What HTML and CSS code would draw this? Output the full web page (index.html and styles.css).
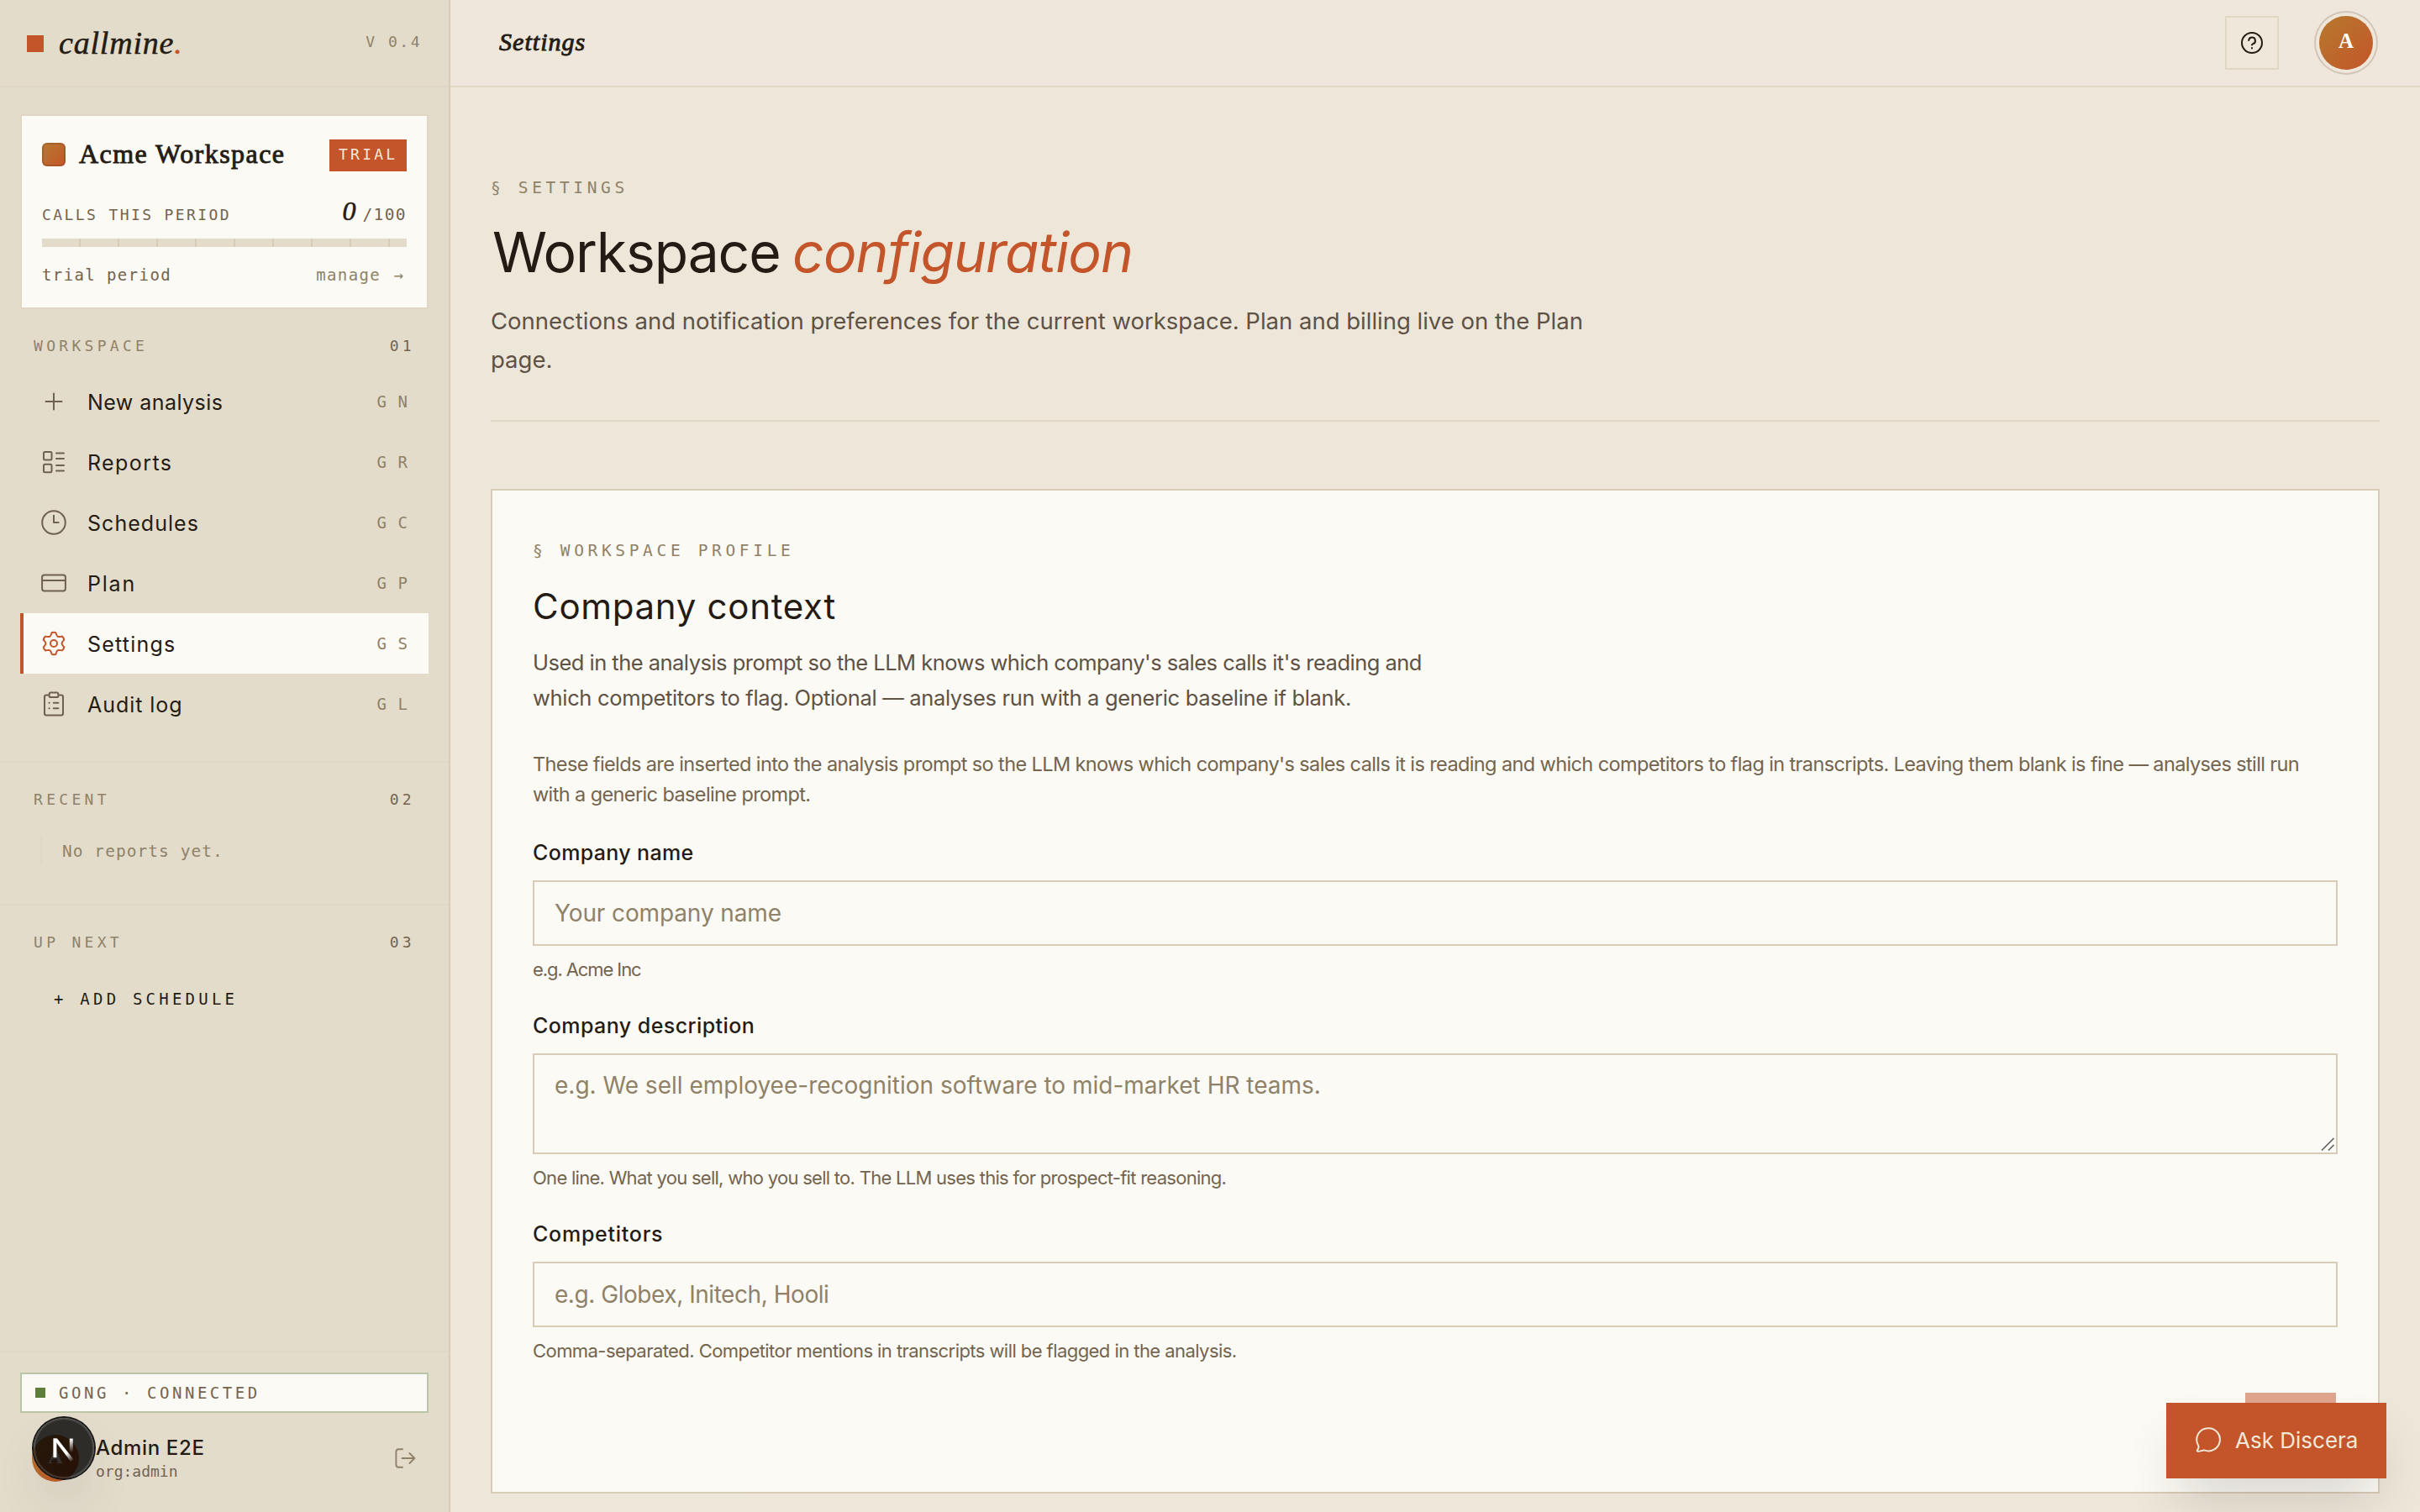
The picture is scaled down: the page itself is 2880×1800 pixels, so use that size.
FILE: index.html
```html
<!DOCTYPE html>
<html lang="en">
<head>
<meta charset="utf-8">
<title>Settings · callmine</title>
<link rel="stylesheet" href="styles.css">
</head>
<body>
<div class="app">
  <aside class="sidebar">
    <div class="brand">
      <span class="brand-mark"></span>
      <span class="brand-name">callmine<span class="brand-dot">.</span></span>
      <span class="brand-version">V 0.4</span>
    </div>

    <section class="plan-card">
      <div class="plan-head">
        <span class="plan-swatch"></span>
        <span class="plan-name">Acme Workspace</span>
        <span class="plan-badge">TRIAL</span>
      </div>
      <div class="plan-usage">
        <span class="plan-usage-label">CALLS THIS PERIOD</span>
        <span class="plan-usage-value"><em>0</em><span class="plan-usage-max">/100</span></span>
      </div>
      <div class="plan-bar"></div>
      <div class="plan-foot">
        <span>trial period</span>
        <a class="plan-manage">manage <span class="arrow">→</span></a>
      </div>
    </section>

    <div class="section-label section-label-first"><span>WORKSPACE</span><span class="section-no">01</span></div>
    <nav class="nav">
      <a class="nav-item">
        <svg class="nav-icon" viewBox="-16 -16 32 32"><path d="M-9.5 0H9.5M0-9.5V9.5"/></svg>
        <span class="nav-text ls-new">New analysis</span><span class="kbd">G N</span>
      </a>
      <a class="nav-item">
        <svg class="nav-icon" viewBox="-16 -16 32 32"><rect x="-12" y="-12" width="9.5" height="9.5" rx="1.5"/><rect x="-12" y="2.8" width="9.5" height="9.5" rx="1.5"/><path d="M3-10.5H12M3-4H12M3 3.9H12M3 10.6H12"/></svg>
        <span class="nav-text ls-reports">Reports</span><span class="kbd">G R</span>
      </a>
      <a class="nav-item">
        <svg class="nav-icon" viewBox="-16 -16 32 32"><circle r="13.8"/><path d="M0-8.3V0H5.6"/></svg>
        <span class="nav-text ls-schedules">Schedules</span><span class="kbd">G C</span>
      </a>
      <a class="nav-item">
        <svg class="nav-icon" viewBox="-16 -16 32 32"><rect x="-13.9" y="-9.4" width="27.8" height="18.8" rx="2.6"/><path d="M-13.9-3H13.9"/></svg>
        <span class="nav-text ls-plan">Plan</span><span class="kbd">G P</span>
      </a>
      <a class="nav-item is-active">
        <svg class="nav-icon" viewBox="-16 -16 32 32">
          <defs><path id="cog-lobe" d="M-2.26-12.8Q0-13.8 2.26-12.8C3-11.6 3.19-9.13 4.75-8.23C6.31-7.33 8.55-8.4 9.96-8.36"/></defs>
          <use href="#cog-lobe"/><use href="#cog-lobe" transform="rotate(60)"/><use href="#cog-lobe" transform="rotate(120)"/><use href="#cog-lobe" transform="rotate(180)"/><use href="#cog-lobe" transform="rotate(240)"/><use href="#cog-lobe" transform="rotate(300)"/>
          <circle r="4"/>
        </svg>
        <span class="nav-text ls-settings">Settings</span><span class="kbd">G S</span>
      </a>
      <a class="nav-item">
        <svg class="nav-icon" viewBox="-16 -16 32 32"><path d="M-6-10.6H-9Q-11-10.6-11-8.6V11.4Q-11 13.4-9 13.4H9Q11 13.4 11 11.4V-8.6Q11-10.6 9-10.6H6"/><rect x="-5.3" y="-13.4" width="10.6" height="5.4" rx="1.6"/><path d="M-.2-1.3H5.4M-.2 5.3H5.4M-5.6-1.3H-5.3M-5.6 5.3H-5.3"/></svg>
        <span class="nav-text ls-audit">Audit log</span><span class="kbd">G L</span>
      </a>
    </nav>

    <section class="side-section">
      <div class="section-label"><span>RECENT</span><span class="section-no">02</span></div>
      <div class="recent-empty">No reports yet.</div>
    </section>

    <section class="side-section">
      <div class="section-label"><span>UP NEXT</span><span class="section-no">03</span></div>
      <a class="add-schedule">+ ADD SCHEDULE</a>
    </section>

    <footer class="side-foot">
      <div class="conn"><span class="conn-dot"></span><span>GONG · CONNECTED</span></div>
      <div class="user">
        <span class="user-avatar">A</span>
        <span class="user-meta"><span class="user-name">Admin E2E</span><span class="user-role">org:admin</span></span>
        <svg class="user-logout" viewBox="0 0 28 28"><path d="M11 3.2H6.4Q3.4 3.2 3.4 6.2V21.8Q3.4 24.8 6.4 24.8H11M10.5 14H25.4M19.4 8L25.4 14L19.4 20"/></svg>
      </div>
    </footer>
  </aside>

  <div class="main">
    <header class="topbar">
      <span class="topbar-title">Settings</span>
      <span class="topbar-help">
        <svg viewBox="-16 -16 32 32"><circle r="12"/><path d="M-3.8-3A3.9 3.9 0 1 1 1.2 1.2Q0 1.7 0 2.6"/><path class="dot" d="M0 6V6.4"/></svg>
      </span>
      <span class="topbar-avatar">A</span>
    </header>

    <main class="content">
      <div class="page-head">
        <div class="eyebrow">§ SETTINGS</div>
        <h1><span class="h1-a">Workspace</span> <em>configuration</em></h1>
        <p class="lede">Connections and notification preferences for the current workspace. Plan and billing live on the Plan<br>page.</p>
      </div>

      <section class="card">
        <div class="eyebrow">§ WORKSPACE PROFILE</div>
        <h2>Company context</h2>
        <p class="card-intro"><span>Used in the analysis prompt so the LLM knows which company's sales calls it's reading and</span><br><span class="card-intro-end">which competitors to flag. Optional — analyses run with a generic baseline if blank.</span></p>
        <p class="card-note">These fields are inserted into the analysis prompt so the LLM knows which company's sales calls it is reading and which competitors to flag in transcripts. Leaving them blank is fine — analyses still run<br>with a generic baseline prompt.</p>

        <label class="field-label" for="f-name">Company name</label>
        <input class="field-input ls-ph-name" id="f-name" type="text" placeholder="Your company name">
        <div class="hint hint-name">e.g. Acme Inc</div>

        <label class="field-label ls-desc" for="f-desc">Company description</label>
        <div class="area">
          <textarea class="field-input field-area" id="f-desc" placeholder="e.g. We sell employee-recognition software to mid-market HR teams."></textarea>
          <svg class="grip" viewBox="0 0 18 18"><path d="M2 16.5L16.5 2M10 16.5L16.5 10"/></svg>
        </div>
        <div class="hint hint-desc">One line. What you sell, who you sell to. The LLM uses this for prospect-fit reasoning.</div>

        <label class="field-label ls-comp" for="f-comp">Competitors</label>
        <input class="field-input ls-ph-comp" id="f-comp" type="text" placeholder="e.g. Globex, Initech, Hooli">
        <div class="hint hint-comp">Comma-separated. Competitor mentions in transcripts will be flagged in the analysis.</div>

        <div class="actions"><span class="save"></span></div>
      </section>
    </main>
  </div>
</div>

<div class="dev-badge">
  <svg viewBox="-38 -38 76 76">
    <defs>
      <linearGradient id="n-diag" gradientUnits="userSpaceOnUse" x1="0" y1="2" x2="10" y2="16"><stop offset=".3" stop-color="#fff"/><stop offset="1" stop-color="#fff" stop-opacity="0"/></linearGradient>
      <linearGradient id="n-stem" gradientUnits="userSpaceOnUse" x1="0" y1="-11" x2="0" y2="5"><stop offset="0" stop-color="#fff"/><stop offset="1" stop-color="#fff" stop-opacity="0"/></linearGradient>
    </defs>
    <rect x="-12.6" y="-11.4" width="4" height="22.6" fill="#fff"/>
    <path d="M-12.6-11.4H-8L11.6 13.4L8.2 16Z" fill="url(#n-diag)"/>
    <rect x="6.8" y="-11.4" width="4" height="16.5" fill="url(#n-stem)"/>
  </svg>
</div>

<button class="ask">
  <svg viewBox="0 0 32 32"><path d="M16 2.2A13.6 13.6 0 1 1 11.2 28.4C8.6 28.2 6.4 30.3 3.4 29.8C2.4 29.6 2.6 28.6 3.4 27.6C4.8 25.8 4.6 23.6 4 22.4A13.6 13.6 0 0 1 16 2.2Z"/></svg>
  <span>Ask Discera</span>
</button>
</body>
</html>
```
FILE: styles.css
```css
:root {
  --ink: #241c14;
  --ink-2: #5e5246;
  --ink-3: #73644f;
  --ink-4: #8f8268;
  --accent: #c4552a;
  --paper: #fcfaf4;
  --side: #e4dccb;
  --bg: #eee6d9;
  --rule: #e0d8c5;
  --rule-strong: #d7ccb8;
  --sans: Inter, "Liberation Sans", sans-serif;
  --serif: "Liberation Serif", serif;
  --mono: "DejaVu Sans Mono", "Liberation Mono", monospace;
}

* { box-sizing: border-box; }

body {
  margin: 0;
  background: linear-gradient(90deg, #ede7d9 20%, #eee6d9 80%);
  color: var(--ink);
  font-family: var(--sans);
}

.app {
  display: grid;
  grid-template-columns: 536px 1fr;
  height: 1800px;
  overflow: hidden;
}

/* Sidebar */
.sidebar {
  display: flex;
  flex-direction: column;
  background: var(--side);
  border-right: 2px solid var(--rule-strong);
  font-family: var(--mono);
}

.brand {
  display: flex;
  align-items: center;
  height: 104px;
  padding: 0 32px;
  border-bottom: 2px solid #dfd6c5;
}
.brand-mark { width: 20px; height: 20px; background: var(--accent); margin-top: 2px; }
.brand-name {
  margin-left: 18px;
  font: italic 38px/44px var(--serif);
  letter-spacing: .8px;
  -webkit-text-stroke: .5px;
}
.brand-dot { color: var(--accent); }
.brand-version {
  margin-left: auto;
  padding-bottom: 3px;
  font-size: 18px;
  letter-spacing: 2.52px;
  color: var(--ink-4);
}

.plan-card {
  height: 232px;
  margin: 32px 24px 0;
  padding: 24px;
  background: var(--paper);
  border: 2px solid var(--rule);
}
.plan-head { display: flex; align-items: center; height: 46px; }
.plan-swatch {
  width: 28px;
  height: 28px;
  margin-bottom: 2px;
  border-radius: 6px;
  background: linear-gradient(135deg, #b67a2e, #c4552a);
  box-shadow: inset 0 0 0 2px rgba(36, 28, 20, .15);
}
.plan-name {
  margin-left: 16px;
  padding-bottom: 4px;
  font: 32px/40px var(--serif);
  letter-spacing: 1.45px;
  -webkit-text-stroke: .9px;
}
.plan-badge {
  width: 92px;
  height: 38px;
  margin-left: auto;
  padding-left: 11px;
  background: var(--accent);
  color: #f3e8d8;
  font-size: 18px;
  line-height: 36px;
  letter-spacing: 3.24px;
}
.plan-usage {
  display: flex;
  justify-content: space-between;
  align-items: baseline;
  height: 36px;
  margin-top: 25px;
  color: var(--ink-3);
}
.plan-usage-label { font-size: 18px; letter-spacing: 2.4px; }
.plan-usage-value em {
  display: inline-block;
  margin-right: 8px;
  font: italic 32px/36px var(--serif);
  color: var(--ink);
  -webkit-text-stroke: .6px;
}
.plan-usage-max { font-size: 19.5px; letter-spacing: 1.4px; }
.plan-bar {
  height: 10px;
  margin-top: 15px;
  background: repeating-linear-gradient(90deg, #e4dccb 0 44px, #d7ccb8 44px 46px);
}
.plan-foot {
  display: flex;
  justify-content: space-between;
  margin-top: 19px;
  color: var(--ink-3);
  font-size: 19px;
  line-height: 28px;
  letter-spacing: 1.4px;
}
.plan-manage { color: var(--ink-4); }
.arrow { display: inline-block; width: 18px; font-size: 19px; line-height: 20px; text-align: center; }

.section-label {
  display: flex;
  justify-content: space-between;
  padding: 0 40px;
  color: var(--ink-4);
  font-size: 18px;
  line-height: 24px;
  letter-spacing: 4.3px;
}
.section-label-first { margin-top: 32px; }
.section-no { color: var(--ink-3); }

.nav { margin: 18px 24px 32px; }
.nav-item {
  display: flex;
  align-items: center;
  height: 72px;
  padding: 0 24px 0 20px;
  border-left: 4px solid transparent;
}
.nav-item.is-active { background: var(--paper); border-left-color: var(--accent); }
.nav-icon {
  width: 32px;
  height: 32px;
  fill: none;
  stroke: #6f6150;
  stroke-width: 2;
  stroke-linecap: round;
  stroke-linejoin: round;
}
.is-active .nav-icon { stroke: var(--accent); }
.nav-text { margin-left: 24px; padding-top: 1px; font: 25px/36px var(--sans); }
.ls-new { letter-spacing: .45px; }
.ls-reports { letter-spacing: 1.4px; }
.ls-schedules { letter-spacing: 1.03px; }
.ls-plan { letter-spacing: 1.8px; }
.ls-settings { letter-spacing: 1.2px; }
.ls-audit { letter-spacing: .95px; }
.kbd {
  margin-left: auto;
  padding-bottom: 1px;
  color: var(--ink-4);
  font-size: 19px;
  letter-spacing: 1.1px;
}

.side-section { border-top: 2px solid #dfd7c7; padding: 32px 0 0; }
.recent-empty {
  height: 31px;
  margin: 33px 24px 48px 48px;
  padding-left: 24px;
  border-left: 2px solid #dfd7c7;
  color: var(--ink-4);
  font-size: 19.5px;
  line-height: 33px;
  letter-spacing: 1.05px;
}
.add-schedule {
  display: block;
  margin: 39px 0 0 64px;
  color: var(--ink);
  font-size: 19px;
  line-height: 32px;
  letter-spacing: 4.22px;
}

.side-foot {
  height: 192px;
  margin-top: auto;
  padding: 24px 24px 0;
  border-top: 2px solid #dfd7c7;
}
.conn {
  display: flex;
  align-items: center;
  height: 48px;
  padding: 0 0 1px 16px;
  background: var(--paper);
  border: 2px solid #bac5a8;
  color: var(--ink-3);
  font-size: 19px;
  letter-spacing: 3.55px;
}
.conn-dot { width: 12px; height: 12px; margin: 1px 16px 0 0; background: #5d7d3b; }
.user {
  display: flex;
  align-items: center;
  height: 56px;
  margin-top: 26px;
  padding: 0 14px;
}
.user-avatar {
  width: 56px;
  height: 56px;
  border-radius: 50%;
  background: linear-gradient(135deg, #b67a2e, #c4552a);
  color: #fff;
  font: bold 24px/52px var(--serif);
  text-align: center;
}
.user-meta { display: flex; flex-direction: column; margin-left: 20px; padding-top: 4px; }
.user-name { font: 500 24px/28px var(--sans); letter-spacing: .66px; }
.user-role { font-size: 18px; line-height: 28px; color: var(--ink-3); }
.user-logout {
  width: 28px;
  height: 28px;
  margin-left: auto;
  fill: none;
  stroke: var(--ink-4);
  stroke-width: 1.9;
  stroke-linecap: round;
  stroke-linejoin: round;
}

/* Main column */
.main { display: flex; flex-direction: column; min-width: 0; }

.topbar {
  display: flex;
  align-items: center;
  height: 104px;
  padding: 0 56px;
  background: #efe7dc;
  border-bottom: 2px solid var(--rule);
}
.topbar-title {
  padding-bottom: 2px;
  margin-left: 2px;
  font: italic 30px/36px var(--serif);
  letter-spacing: 1.04px;
  -webkit-text-stroke: .9px;
}
.topbar-help {
  display: grid;
  place-items: center;
  width: 64px;
  height: 64px;
  margin-left: auto;
  margin-right: 48px;
  border: 2px solid var(--rule);
  background: #efe7d9;
}
.topbar-help svg {
  width: 32px;
  height: 32px;
  fill: none;
  stroke: var(--ink);
  stroke-width: 2;
  stroke-linecap: round;
}
.topbar-avatar {
  width: 64px;
  height: 64px;
  border-radius: 50%;
  background: linear-gradient(135deg, #b67a2e, #c4552a);
  box-shadow: 0 0 0 4px #efe7d9, 0 0 0 6px #cfc6b9;
  color: #fff;
  font: bold 25px/60px var(--serif);
  text-align: center;
}

.content { padding: 106px 48px 0; }
.eyebrow {
  color: var(--ink-4);
  font: 19.5px/28px var(--mono);
  letter-spacing: 4.65px;
}
.page-head { padding-bottom: 49px; border-bottom: 2px solid var(--rule); }
h1 {
  margin: 24px 0 0;
  padding-left: 2px;
  font-size: 66px;
  font-weight: 400;
  line-height: 76px;
  letter-spacing: -1.1px;
}
h1 em { margin-left: -3px; color: var(--accent); letter-spacing: -.93px; }
.lede {
  margin: 21px 0 0;
  color: var(--ink-2);
  font-size: 27.5px;
  line-height: 46px;
}

.card {
  height: 1196px;
  margin-top: 80px;
  padding: 58px 48px 0;
  background: var(--paper);
  border: 2px solid var(--rule-strong);
}
h2 {
  margin: 26px 0 0;
  font-size: 42px;
  font-weight: 400;
  line-height: 52px;
  letter-spacing: .7px;
}
.card-intro {
  margin: 20px 0 0;
  color: var(--ink-2);
  font-size: 25.5px;
  line-height: 42px;
  letter-spacing: -.52px;
}
.card-intro-end { letter-spacing: -.33px; }
.card-note {
  margin: 40px 0 0;
  color: var(--ink-3);
  font-size: 23.5px;
  line-height: 36px;
  letter-spacing: -.61px;
  white-space: nowrap;
}

.field-label {
  display: block;
  margin: 32px 0 15px;
  font-size: 25px;
  font-weight: 500;
  line-height: 36px;
  letter-spacing: .35px;
}
.card-note + .field-label { margin-top: 33px; }
.ls-desc { letter-spacing: .44px; }
.ls-comp { letter-spacing: .75px; }

.field-input {
  display: block;
  width: 100%;
  height: 78px;
  padding: 0 24px 1px;
  background: transparent;
  border: 2px solid var(--rule-strong);
  border-radius: 0;
  color: var(--ink);
  font: 28px/42px var(--sans);
  outline: none;
}
.field-input::placeholder { color: var(--ink-4); opacity: 1; }
.ls-ph-name { letter-spacing: -.12px; }
.ls-ph-comp { letter-spacing: -.45px; }
.area { position: relative; }
.field-area { height: 120px; padding: 15px 24px; resize: none; }
.grip {
  position: absolute;
  right: 3px;
  bottom: 3px;
  width: 18px;
  height: 18px;
  fill: none;
  stroke: #5d5d5d;
  stroke-width: 1.6;
}

.hint {
  margin-top: 11px;
  color: var(--ink-3);
  font-size: 22px;
  line-height: 34px;
}
.hint-name { letter-spacing: -1.09px; }
.hint-desc { letter-spacing: -.72px; }
.hint-comp { letter-spacing: -.56px; }

.actions { display: flex; justify-content: flex-end; margin-top: 33px; padding-right: 2px; }
.save { width: 108px; height: 70px; background: #dfa58f; }

/* Floating items */
.dev-badge {
  position: absolute;
  left: 40px;
  top: 1688px;
  width: 72px;
  height: 72px;
  border-radius: 50%;
  background: rgba(0, 0, 0, .8);
  box-shadow: 0 0 0 2px #171717, inset 0 0 0 2px rgba(255, 255, 255, .14), 0 32px 64px -16px rgba(0, 0, 0, .24);
}
.dev-badge svg { display: block; width: 76px; height: 76px; margin: -2px; }

.ask {
  position: absolute;
  left: 2578px;
  top: 1670px;
  display: flex;
  align-items: center;
  width: 262px;
  height: 90px;
  padding: 0 0 0 34px;
  border: 0;
  background: var(--accent);
  color: #f1e7d8;
  font: 26px/36px var(--sans);
  box-shadow: 0 32px 64px -16px rgba(31, 27, 22, .2);
}
.ask svg {
  width: 32px;
  height: 32px;
  margin: -2px 16px 0 0;
  fill: none;
  stroke: currentColor;
  stroke-width: 2;
}
```
